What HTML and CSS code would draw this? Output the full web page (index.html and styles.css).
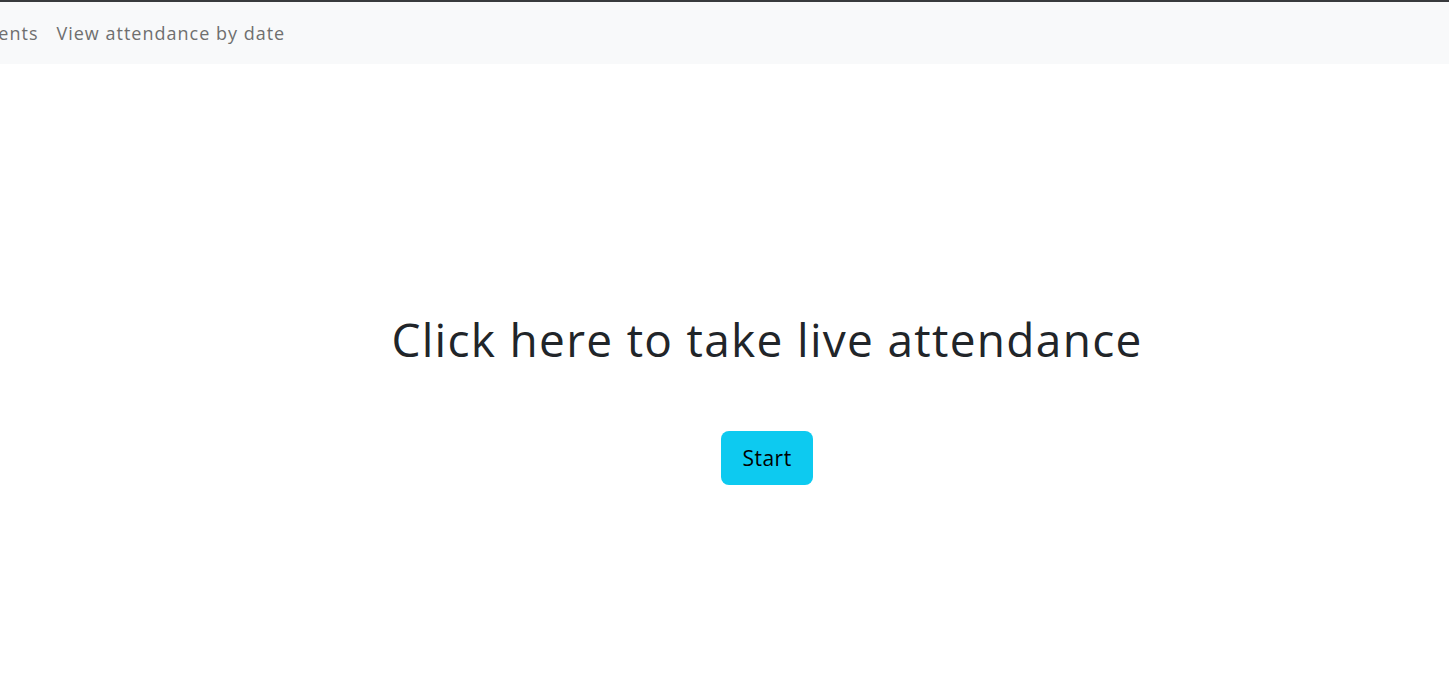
FILE: index.html
```html
<!DOCTYPE html>
<html lang="en">
<head>
<meta charset="utf-8">
<title>Live attendance</title>
<link rel="stylesheet" href="styles.css">
</head>
<body>
<nav class="navbar">
  <ul class="nav-list">
    <li class="nav-item first"><a class="nav-link" href="#">Students</a></li>
    <li class="nav-item"><a class="nav-link" href="#">View attendance by date</a></li>
  </ul>
</nav>
<main class="main">
  <section class="hero">
    <h1 class="hero-title">Click here to take live attendance</h1>
    <button class="btn-start" type="button">Start</button>
  </section>
</main>
</body>
</html>
```

FILE: styles.css
```css
html, body {
  margin: 0;
  padding: 0;
  background: #ffffff;
}
body {
  font-family: "Open Sans", "Noto Sans", sans-serif;
  color: #212529;
  overflow: hidden;
}
.navbar {
  border-top: 2px solid #383a3d;
  background: #f8f9fa;
  height: 62px;
  display: flex;
  align-items: center;
  overflow: hidden;
}
.nav-list {
  list-style: none;
  margin: 0 0 0 -44px;
  padding: 0;
  display: flex;
  gap: 18px;
}
.nav-link {
  font-size: 18px;
  letter-spacing: 1px;
  color: #6f6f6f;
  text-decoration: none;
  display: block;
}
.main {
  padding-left: 85px;
}
.hero {
  display: flex;
  flex-direction: column;
  align-items: center;
  padding-top: 248px;
}
.hero-title {
  margin: 0;
  font-size: 46px;
  font-weight: 400;
  letter-spacing: 1.3px;
  line-height: 1.2;
  color: #212529;
}
.btn-start {
  margin-top: 64px;
  width: 92px;
  height: 54px;
  border: none;
  border-radius: 8px;
  background: #0dcaf0;
  color: #000;
  font-family: inherit;
  font-size: 21px;
  letter-spacing: 0.5px;
  cursor: pointer;
}
```
